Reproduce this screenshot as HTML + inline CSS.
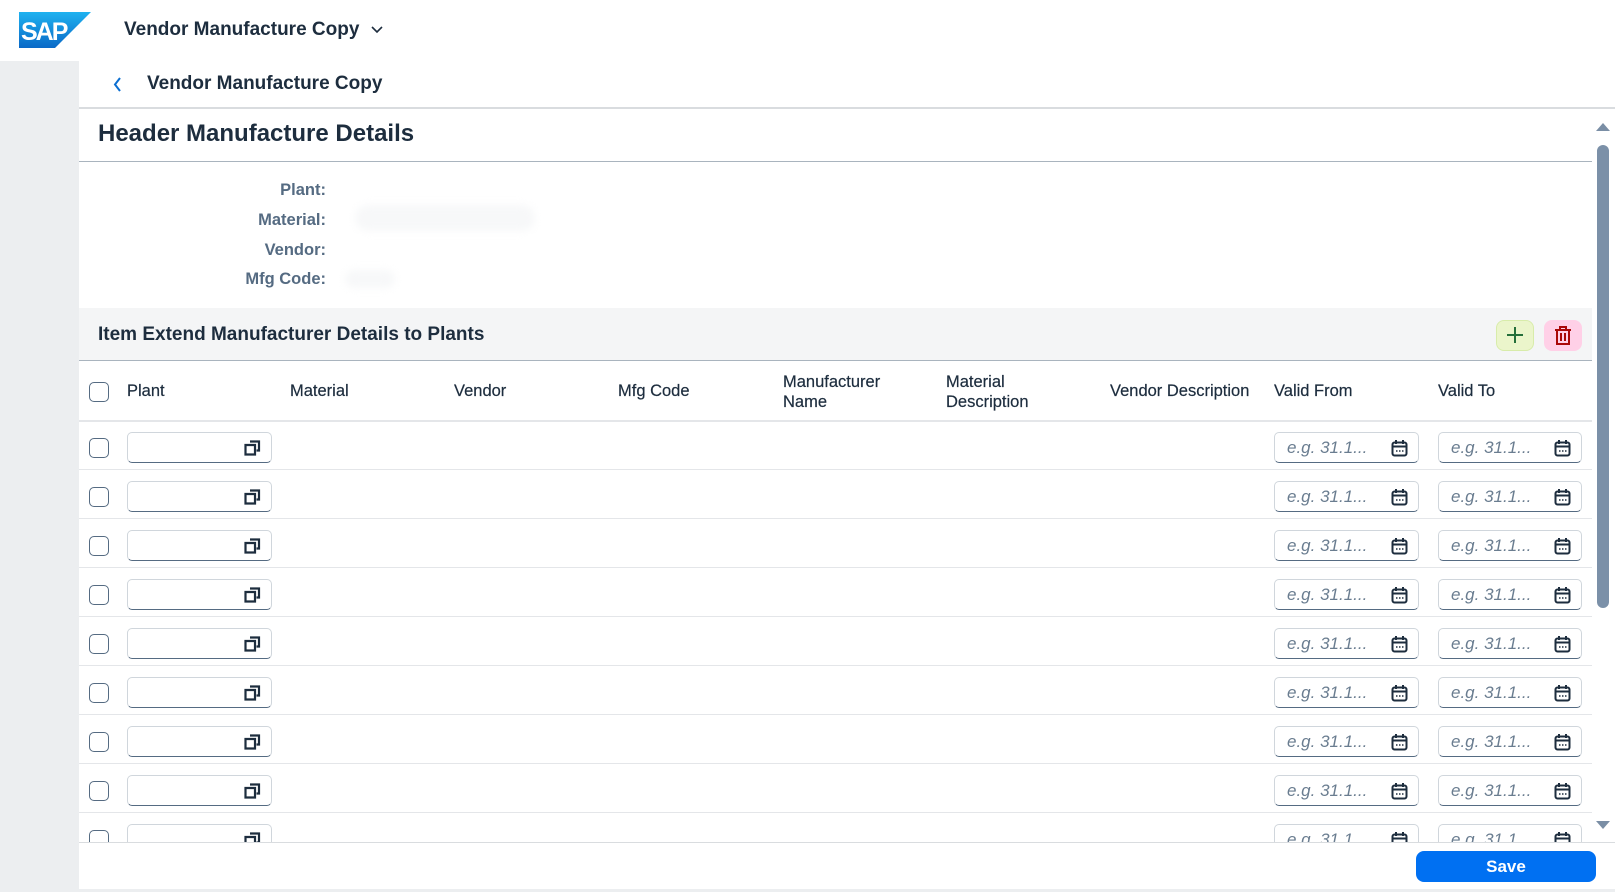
<!DOCTYPE html>
<html><head><meta charset="utf-8"><style>
*{box-sizing:border-box;margin:0;padding:0}
body{width:1615px;height:892px;overflow:hidden;background:#fff;font-family:"Liberation Sans",Arial,sans-serif;color:#1d2d3e;position:relative}
.abs{position:absolute}
.side{left:0;top:61px;width:79px;height:831px;background:#eceef0}
.lbl{right:1289px;font-size:16.5px;font-weight:bold;color:#556b82;text-align:right}
.th{top:372px;font-size:16.5px;color:#1d2d3e;line-height:20px;-webkit-text-stroke:0.2px #1d2d3e}
.cb{width:20px;height:20px;border:1.5px solid #556b82;border-radius:5px;background:#fff}
.inp{height:31px;border:1px solid #d0d6dc;border-bottom:1.5px solid #556b82;border-radius:5px;background:#fff}
.ph{font-style:italic;color:#6a7d90;font-size:17px;position:absolute;left:12px;top:5px}
.rl{left:79px;width:1513px;height:1px;background:#e4e6e9}
</style></head><body>
<svg class="abs" style="left:19px;top:12px" width="72" height="36" viewBox="0 0 72 36"><defs><linearGradient id="g" x1="0" y1="0" x2="0" y2="1"><stop offset="0" stop-color="#1fb2f0"/><stop offset="1" stop-color="#0a69c7"/></linearGradient></defs><polygon points="0,0 72,0 36,36 0,36" fill="url(#g)"/><text x="2" y="28" font-family="Liberation Sans" font-weight="bold" font-size="25" fill="#fff" letter-spacing="-2">SAP</text></svg>
<div class="abs" style="left:124px;top:19px;font-size:19px;font-weight:bold">Vendor Manufacture Copy</div>
<svg class="abs" style="left:371px;top:26px" width="12" height="8"><path d="M1 1l5 5 5-5" stroke="#1d2d3e" stroke-width="1.6" fill="none"/></svg>
<div class="abs side"></div>
<svg class="abs" style="left:113px;top:77px" width="9" height="15"><path d="M7 1L2 7.5 7 14" stroke="#0a6ed1" stroke-width="2" fill="none"/></svg>
<div class="abs" style="left:147px;top:73px;font-size:19px;font-weight:bold">Vendor Manufacture Copy</div>
<div class="abs" style="left:79px;top:107px;width:1536px;height:2px;background:#d9dcdf"></div>
<div class="abs" style="left:98px;top:120px;font-size:24px;font-weight:bold">Header Manufacture Details</div>
<div class="abs" style="left:79px;top:161px;width:1513px;height:1px;background:#a9b4be"></div>
<div class="abs lbl" style="top:181px">Plant:</div>
<div class="abs lbl" style="top:211px">Material:</div>
<div class="abs lbl" style="top:241px">Vendor:</div>
<div class="abs lbl" style="top:270px">Mfg Code:</div>
<div class="abs" style="left:355px;top:205px;width:180px;height:26px;background:#f7f8f9;border-radius:13px;filter:blur(4px)"></div>
<div class="abs" style="left:345px;top:270px;width:50px;height:18px;background:#f7f8f9;border-radius:9px;filter:blur(4px)"></div>
<div class="abs" style="left:79px;top:308px;width:1513px;height:53px;background:#f4f5f6;border-bottom:1px solid #a9b4be"></div>
<div class="abs" style="left:98px;top:324px;font-size:19px;font-weight:bold">Item Extend Manufacturer Details to Plants</div>
<div class="abs" style="left:1496px;top:320px;width:38px;height:31px;background:#ebf5cb;border:1px solid #d8ecaa;border-radius:8px"></div>
<svg class="abs" style="left:1506px;top:326px" width="18" height="18"><path d="M9 1v16M1 9h16" stroke="#256f3a" stroke-width="2"/></svg>
<div class="abs" style="left:1544px;top:320px;width:38px;height:31px;background:#ffd0e7;border-radius:8px"></div>
<svg class="abs" style="left:1553px;top:325px" width="20" height="21"><path d="M2 5h16M7 5V2h6v3M4 5v14h12V5M8 8v8M12 8v8" stroke="#aa0808" stroke-width="2" fill="none"/></svg>
<div class="abs cb" style="left:89px;top:382px"></div>
<div class="abs th" style="left:127px;top:381px">Plant</div>
<div class="abs th" style="left:290px;top:381px">Material</div>
<div class="abs th" style="left:454px;top:381px">Vendor</div>
<div class="abs th" style="left:618px;top:381px">Mfg Code</div>
<div class="abs th" style="left:783px">Manufacturer<br>Name</div>
<div class="abs th" style="left:946px">Material<br>Description</div>
<div class="abs th" style="left:1110px;top:381px">Vendor Description</div>
<div class="abs th" style="left:1274px;top:381px">Valid From</div>
<div class="abs th" style="left:1438px;top:381px">Valid To</div>
<div class="abs" style="left:79px;top:420px;width:1513px;height:2px;background:#e4e6e9"></div>
<div id="rows"></div>
<script>
var h='';var ic='<svg width="19" height="19" viewBox="0 0 19 19" style="position:absolute;right:9px;top:5px"><path d="M7 3.5h9v9h-2.5M2.5 7h9.5v9.5H2.5z" stroke="#1d2d3e" stroke-width="2.2" fill="none"/></svg>';
var cal='<svg width="17" height="18" viewBox="0 0 17 18" style="position:absolute;right:10px;top:6px"><rect x="1.5" y="3.5" width="14" height="13" rx="2" stroke="#1d2d3e" stroke-width="2" fill="none"/><path d="M1.5 7.5h14M5 1v4M12 1v4" stroke="#1d2d3e" stroke-width="2"/><path d="M5 12h1.5M8 12h1.5M11 12h1.5" stroke="#1d2d3e" stroke-width="1.5"/></svg>';
for(var i=0;i<9;i++){var t=421+i*49;
h+='<div class="abs cb" style="left:89px;top:'+(t+17)+'px"></div>';
h+='<div class="abs inp" style="left:127px;top:'+(t+11)+'px;width:145px">'+ic+'</div>';
h+='<div class="abs inp" style="left:1274px;top:'+(t+11)+'px;width:145px"><span class="ph">e.g. 31.1...</span>'+cal+'</div>';
h+='<div class="abs inp" style="left:1438px;top:'+(t+11)+'px;width:144px"><span class="ph">e.g. 31.1...</span>'+cal+'</div>';
if(i<8)h+='<div class="abs rl" style="top:'+(t+48)+'px"></div>';}
document.getElementById('rows').innerHTML=h;
</script>
<div class="abs" style="left:79px;top:842px;width:1536px;height:50px;background:#fff;border-top:1px solid #d9dcdf"></div>
<div class="abs" style="left:1416px;top:851px;width:180px;height:31px;background:#0070f2;border-radius:8px;color:#fff;font-weight:bold;font-size:17px;text-align:center;line-height:31px">Save</div>
<div class="abs" style="left:0;top:889px;width:1615px;height:3px;background:#eceef0"></div>
<svg class="abs" style="left:1596px;top:122px" width="14" height="10"><path d="M0 9L7 1l7 8z" fill="#7a8ea5"/></svg>
<div class="abs" style="left:1597px;top:145px;width:12px;height:463px;background:#7b90a8;border-radius:6px"></div>
<svg class="abs" style="left:1596px;top:820px" width="14" height="10"><path d="M0 1l7 8 7-8z" fill="#7a8ea5"/></svg>
</body></html>
